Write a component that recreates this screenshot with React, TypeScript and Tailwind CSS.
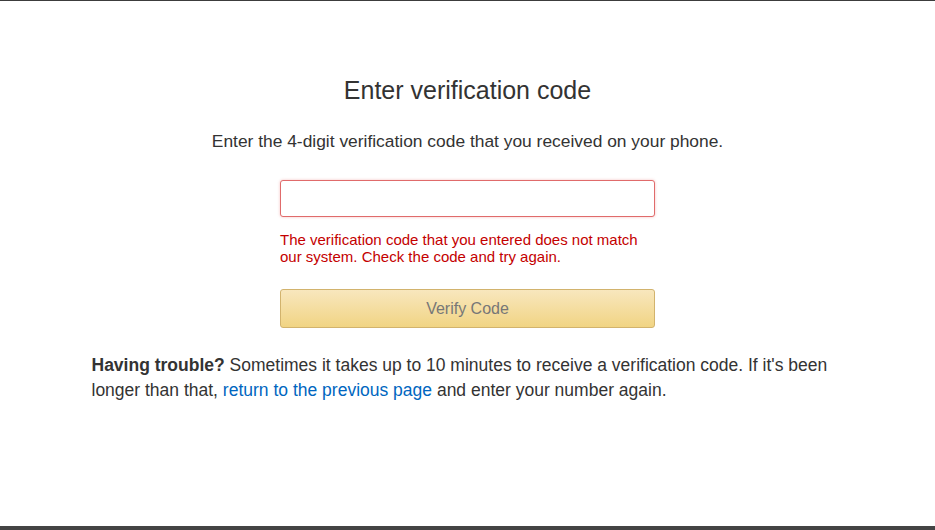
export default function App() {
  return (
    <div className="flex h-[530px] flex-col bg-white font-['Liberation_Sans',Arial,sans-serif] text-[#333]">
      <div className="h-px bg-[#3c3c3c]" />
      <main className="flex-1">
        <div className="mx-auto w-[752px] pt-[73px]">
          <h1 className="text-center text-[25px] leading-[33px] font-normal">Enter verification code</h1>
          <p className="mt-[22px] text-center text-[17.4px] leading-6">
            Enter the 4-digit verification code that you received on your phone.
          </p>

          <div className="mx-auto mt-[27px] w-[375px]">
            <input
              type="text"
              className="block h-[37px] w-full rounded-[3px] border border-[#e06b6b] bg-white px-2 shadow-[0_0_3px_rgba(221,0,0,0.25)] outline-none"
            />
            <p className="mt-[14px] text-[15px] leading-[17px] text-[#c40000]">
              The verification code that you entered does not match our system. Check the code and try again.
            </p>
            <button className="mt-6 block h-[39px] w-full rounded-[3px] border border-[#d2b36d] bg-gradient-to-b from-[#f8e7bd] to-[#f1d483] text-[16px] text-[#777]">
              Verify Code
            </button>
          </div>

          <p className="mt-[25px] text-[17.5px] leading-[25px]">
            <span className="font-bold">Having trouble?</span> Sometimes it takes up to 10 minutes to receive a
            verification code. If it's been longer than that,{" "}
            <a href="#" className="text-[#0066c0]">
              return to the previous page
            </a>{" "}
            and enter your number again.
          </p>
        </div>
      </main>
      <div className="h-1 bg-[#444]" />
    </div>
  );
}
